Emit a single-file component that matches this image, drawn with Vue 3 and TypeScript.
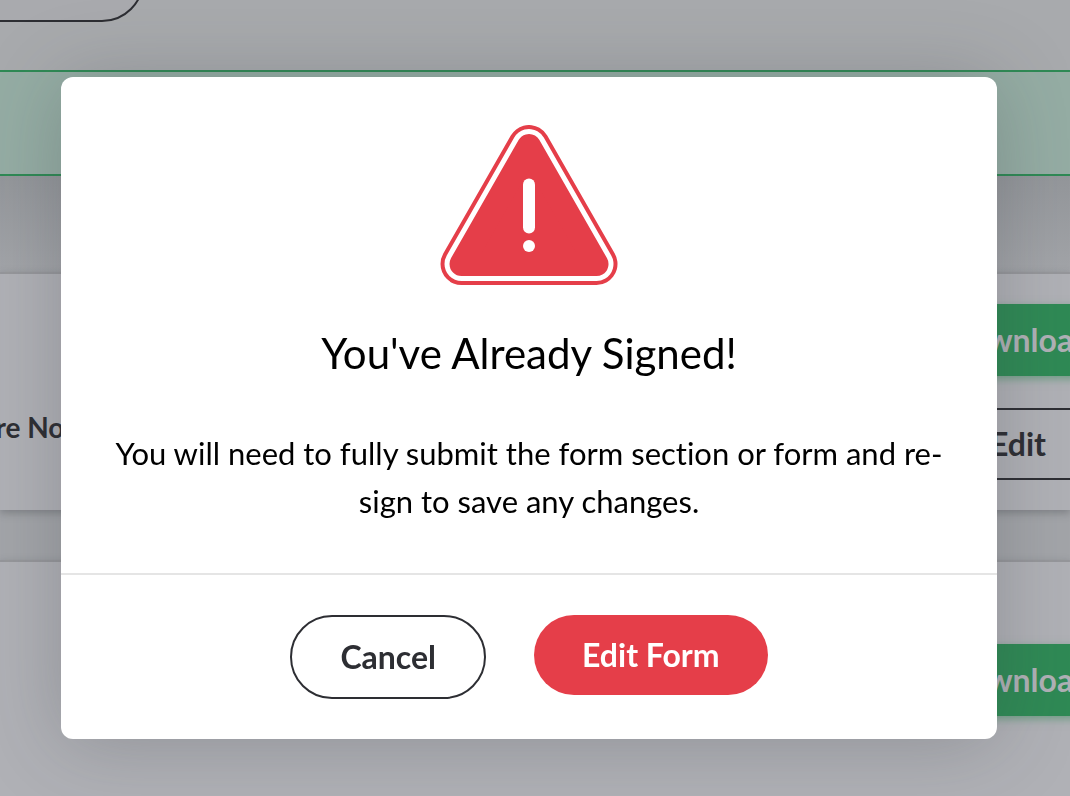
<script setup lang="ts">
import { ref } from 'vue'

interface FormCard {
  id: number
  status: string
  editable: boolean
}

const open = ref(true)
const cards: FormCard[] = [
  { id: 1, status: 'Are Not', editable: true },
  { id: 2, status: '', editable: false },
]

function close(): void {
  open.value = false
}
</script>

<template>
  <div class="page">
    <header class="top">
      <button class="top-button" type="button" aria-label="Back"></button>
    </header>
    <div class="banner"></div>
    <main class="cards">
      <section v-for="card in cards" :key="card.id" class="card">
        <p class="status">{{ card.status }}</p>
        <div class="actions">
          <button class="download" type="button">Download</button>
          <button v-if="card.editable" class="edit" type="button">Edit</button>
        </div>
      </section>
    </main>

    <div v-if="open" class="overlay">
      <div class="modal" role="dialog" aria-modal="true" aria-labelledby="modal-title">
        <div class="modal-body">
          <svg class="warning" viewBox="0 0 178 160" aria-hidden="true">
            <g stroke-linejoin="round">
              <path d="M89 21 156.500 139H21.500Z" fill="#e53e49" stroke="#e53e49" stroke-width="42" />
              <path d="M89 21 156.500 139H21.500Z" fill="#fff" stroke="#fff" stroke-width="34" />
              <path d="M89 21 156.500 139H21.500Z" fill="#e53e49" stroke="#e53e49" stroke-width="24" />
            </g>
            <rect x="83" y="53.500" width="12" height="55" rx="6" fill="#fff" />
            <circle cx="89" cy="121" r="6" fill="#fff" />
          </svg>
          <h2 id="modal-title">You've Already Signed!</h2>
          <p class="message">
            You will need to fully submit the form section or form and re-sign to save any changes.
          </p>
        </div>
        <div class="modal-footer">
          <button class="cancel" type="button" @click="close">Cancel</button>
          <button class="confirm" type="button" @click="close">Edit Form</button>
        </div>
      </div>
    </div>
  </div>
</template>

<style>
body {
  margin: 0;
  background: #a5a7ab;
}
</style>

<style scoped>
.page,
.page * {
  box-sizing: border-box;
}

.page {
  height: 100vh;
  overflow: hidden;
  background: #a5a7ab;
  color: #2d2e33;
  font-family: Lato, 'Liberation Sans', sans-serif;
}

button {
  margin: 0;
  font: inherit;
  font-weight: 700;
  cursor: pointer;
}

.top {
  display: flex;
  align-items: flex-end;
  height: 70px;
  padding-bottom: 48px;
  background: #a8aaad;
}

.top-button {
  flex: none;
  width: 240px;
  height: 84px;
  margin-left: -96px;
  border: 2px solid #2d2e33;
  border-radius: 42px;
  background: #a9aaae;
}

.banner {
  height: 106px;
  border: solid #2f8a55;
  border-width: 2px 0;
  background: #95ada4;
}

.cards {
  display: flex;
  flex-direction: column;
  gap: 50px;
  padding-top: 96px;
  background: linear-gradient(#94979b, #a3a5a9 96px);
}

.card {
  display: flex;
  align-items: flex-start;
  justify-content: space-between;
  min-height: 238px;
  padding: 30px 0;
  border-top: 2px solid #96979b;
  background: #b0b1b6;
  box-shadow: 0 3px 8px rgba(60, 64, 70, 0.35);
}

.card:last-child {
  padding-top: 82px;
}

.status {
  margin: 103px 0 0 -24px;
  font-size: 28px;
  font-weight: 700;
  line-height: 40px;
  white-space: nowrap;
}

.actions {
  display: flex;
  flex: none;
  flex-direction: column;
  gap: 32px;
  width: 240px;
  margin-right: -68px;
}

.download,
.edit {
  height: 72px;
  padding: 0;
  font-size: 32px;
  line-height: 48px;
}

.download {
  border: 0;
  background: #2f8a55;
  color: #b0b1b6;
  box-shadow: 0 3px 8px rgba(47, 138, 85, 0.5);
}

.edit {
  border: 2px solid #2d2e33;
  background: transparent;
  color: #2d2e33;
}

.overlay {
  position: fixed;
  inset: 0;
  padding: 77px 73px 57px 61px;
}

.modal {
  border-radius: 12px;
  background: #fff;
  color: #000;
  box-shadow: 0 4px 80px rgba(50, 55, 60, 0.26);
}

.modal-body {
  display: flex;
  flex-direction: column;
  align-items: center;
  padding: 48px;
  border-bottom: 2px solid #e5e5e5;
  text-align: center;
}

.warning {
  display: block;
  width: 178px;
  height: 160px;
}

h2 {
  margin: 40px 0 48px;
  font-size: 42px;
  font-weight: 400;
  line-height: 56px;
}

.message {
  margin: 0;
  font-size: 31px;
  font-variant-ligatures: none;
  line-height: 48px;
}

.modal-footer {
  display: flex;
  align-items: flex-start;
  justify-content: center;
  gap: 48px;
  padding: 40px 48px;
}

.cancel,
.confirm {
  padding: 16px 48px;
  border-radius: 42px;
  font-size: 32px;
  line-height: 48px;
}

.cancel {
  border: 2px solid #2d2e33;
  background: #fff;
  color: #2d2e33;
}

.confirm {
  border: 0;
  background: #e53e49;
  color: #fff;
}
</style>
